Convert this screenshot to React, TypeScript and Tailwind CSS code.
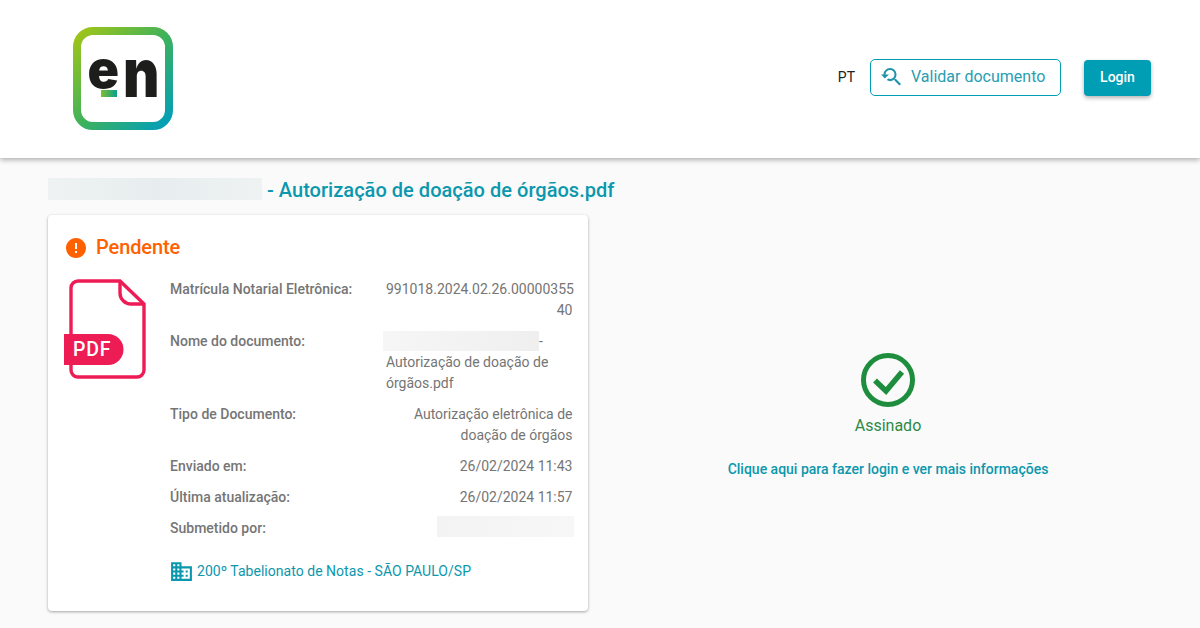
import React from "react";
import { MdDomain, MdError, MdYoutubeSearchedFor } from "react-icons/md";

function Logo() {
  return (
    <svg width="102" height="105" viewBox="0 0 102 105" className="shrink-0">
      <defs>
        <linearGradient id="frame" x1="0" y1="0" x2="1" y2="1">
          <stop offset="0" stopColor="#a2c517" />
          <stop offset="0.5" stopColor="#3fb25a" />
          <stop offset="1" stopColor="#009ebc" />
        </linearGradient>
        <linearGradient id="dash" x1="0" y1="0" x2="1" y2="0">
          <stop offset="0" stopColor="#7fbf2e" />
          <stop offset="1" stopColor="#05a08f" />
        </linearGradient>
      </defs>
      <rect x="5" y="5" width="92" height="95" rx="16" fill="#fff" stroke="url(#frame)" strokeWidth="8" />
      <text x="15.500" y="62" fontFamily="Inter, sans-serif" fontWeight="900" fontSize="52" fill="#1d1d1b">
        e
      </text>
      <text
        x="0"
        y="0"
        transform="translate(51 71) scale(1.08 1.3)"
        fontFamily="Inter, sans-serif"
        fontWeight="900"
        fontSize="52"
        fill="#1d1d1b"
      >
        n
      </text>
      <rect x="29" y="64" width="16" height="7" fill="url(#dash)" />
    </svg>
  );
}

function PdfIcon() {
  return (
    <svg width="82" height="100" viewBox="0 0 82 100" className="shrink-0">
      <path
        d="M56 2H14a7 7 0 0 0-7 7v82a7 7 0 0 0 7 7h59a7 7 0 0 0 7-7V25L56 2z"
        fill="none"
        stroke="#ee1c55"
        strokeWidth="3.4"
      />
      <path d="M56 2v12a11 11 0 0 0 11 11h13" fill="none" stroke="#ee1c55" strokeWidth="3.4" />
      <path d="M0 55h44a15.500 15.500 0 0 1 0 31H0z" fill="#ee1c55" />
      <text x="9" y="77" fontFamily="Roboto, sans-serif" fontSize="19.500" fontWeight="500" fill="#fff" letterSpacing="0.8">
        PDF
      </text>
    </svg>
  );
}

function Row({ label, children, className }: { label: string; children: React.ReactNode; className?: string }) {
  return (
    <div className="flex">
      <span className="w-[216px] shrink-0 font-medium">{label}</span>
      <div className={"w-[188px] " + (className || "text-right pr-[1.5px]")}>{children}</div>
    </div>
  );
}

export default function App() {
  return (
    <div className="w-[1200px] h-[628px] overflow-hidden bg-[#fafafa] font-['Roboto',sans-serif]">
      <header className="h-[158px] bg-white shadow-[0_2px_5px_rgba(0,0,0,0.3)] flex items-start justify-between pl-[72px] pr-[49px] pt-[26px] relative">
        <Logo />
        <div className="flex items-center mt-[33px]">
          <span className="text-sm text-[#212121] mr-[15px] pb-[2px]">PT</span>
          <a className="w-[191px] h-[37px] border border-[#009eb5] rounded-[5px] flex items-center pl-[8px] pb-[1px] text-[#2a9db3] text-base">
            <MdYoutubeSearchedFor className="w-[24px] h-[24px] text-[#1f94aa] mr-[8px]" />
            Validar documento
          </a>
          <button className="ml-[23px] w-[67px] h-[36px] pb-[2px] bg-[#009eb5] rounded-[4px] text-white text-sm font-medium shadow-[0_2px_4px_rgba(0,0,0,0.3)]">
            Login
          </button>
        </div>
      </header>

      <main className="pl-[48px]">
        <h1 className="flex items-center h-[22px] mt-[20px] text-[20px] font-medium tracking-[0.03px] text-[#0b97ad]">
          <span className="w-[214px] h-[22px] mr-[5px] bg-linear-to-r from-[#eef2f2] via-[#e7edee] to-[#eef2f3]"></span>
          <span className="pt-[2px]">- Autorização de doação de órgãos.pdf</span>
        </h1>

        <div className="flex mt-[15px]">
          <section className="w-[540px] h-[396px] bg-white rounded-[4px] shadow-[0_1px_3px_rgba(0,0,0,0.35)] pt-[21px] pl-[16px]">
            <div className="flex items-center h-[24px]">
              <MdError className="w-[24px] h-[24px] text-[#ff6100]" />
              <span className="ml-[8px] pb-[2px] text-[20px] font-medium tracking-[-0.1px] text-[#ff6100]">Pendente</span>
            </div>
            <div className="flex mt-[19px]">
              <PdfIcon />
              <div className="ml-[24px]">
                <div className="flex flex-col gap-[10px] text-sm leading-[21px] text-[#757575]">
                  <Row label="Matrícula Notarial Eletrônica:">
                    <div className="whitespace-nowrap text-left">991018.2024.02.26.00000355</div>
                    <div>40</div>
                  </Row>
                  <Row label="Nome do documento:" className="text-left">
                    <div className="flex items-center h-[21px] -ml-[3px]">
                      <span className="w-[156px] h-[20px] -mt-[2px] bg-linear-to-r from-[#f6f6f6] to-[#efefef]"></span>
                      <span>-</span>
                    </div>
                    Autorização de doação de órgãos.pdf
                  </Row>
                  <Row label="Tipo de Documento:">Autorização eletrônica de doação de órgãos</Row>
                  <Row label="Enviado em:">26/02/2024 11:43</Row>
                  <Row label="Última atualização:">26/02/2024 11:57</Row>
                  <Row label="Submetido por:">
                    <span className="block ml-auto -mr-[1.5px] -mt-[2px] w-[137px] h-[21px] bg-linear-to-r from-[#f3f3f3] to-[#f7f7f7]"></span>
                  </Row>
                </div>
                <a className="flex items-center mt-[20px] text-sm font-normal tracking-[0.03px] text-[#0b97ad]">
                  <MdDomain className="w-[25px] h-[25px] -ml-[1px] mr-[3px] text-[#0b97ad]" />
                  <span className="pb-[2px]">200º Tabelionato de Notas - SÃO PAULO/SP</span>
                </a>
              </div>
            </div>
          </section>

          <section className="w-[600px] flex flex-col items-center pt-[138px]">
            <svg width="54" height="54" viewBox="0 0 54 54">
              <circle cx="27" cy="27" r="24.500" fill="none" stroke="#1e8e3e" strokeWidth="5" />
              <path d="M14 27.500 25 38 41 19" fill="none" stroke="#1e8e3e" strokeWidth="5.500" />
            </svg>
            <span className="mt-[7px] text-base text-[#2b8a46]">Assinado</span>
            <a className="mt-[21px] text-sm font-medium text-[#0b97ad]">
              Clique aqui para fazer login e ver mais informações
            </a>
          </section>
        </div>
      </main>
    </div>
  );
}
